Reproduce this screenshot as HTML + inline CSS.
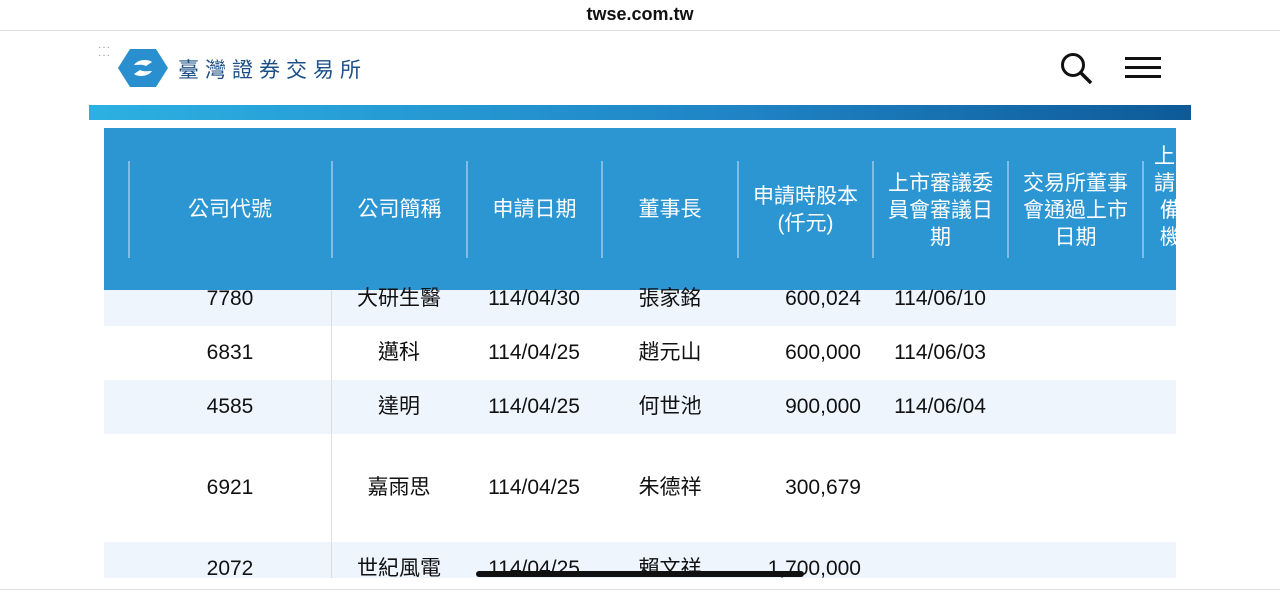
<!DOCTYPE html><html><head><meta charset="utf-8"><style>
body{margin:0;width:1280px;height:591px;overflow:hidden;background:#fff;font-family:"Liberation Sans","Noto Sans CJK TC",sans-serif;position:relative}
.a{position:absolute}
.h{color:#fff;font-size:21px;line-height:27px;text-align:center}
.c{position:absolute;font-size:21px;line-height:24px;color:#111;text-align:center;width:130px;margin-left:-65px}
.k{margin-top:0}
.vl{position:absolute;top:161px;height:97px;width:2px;background:#7fbde6}
</style></head><body>
<div class="a" style="top:4px;left:0;width:1280px;text-align:center;font-size:18px;font-weight:bold;color:#111">twse.com.tw</div>
<div class="a" style="top:30px;left:0;width:1280px;height:1px;background:#ddd"></div>
<div class="a" style="left:98px;top:44px;color:#888;font-size:10px;line-height:8px;letter-spacing:1px">···<br>···</div>
<svg class="a" style="left:118px;top:49px" width="50" height="38" viewBox="0 0 50 38"><path d="M12 0H38L50 19 38 38H12L0 19Z" fill="#2a8fcf"/><path d="M16 16C20 10 30 10 34 13L28 17C24 15 20 16 16 16ZM34 22C30 28 20 28 16 25L22 21C26 23 30 22 34 22Z" fill="#fff"/></svg>
<div class="a" style="left:178px;top:54px;font-size:21px;color:#1c4f86;letter-spacing:6px">臺灣證券交易所</div>
<svg class="a" style="left:1060px;top:52px" width="34" height="32" viewBox="0 0 34 32"><circle cx="13" cy="13" r="10.5" fill="none" stroke="#111" stroke-width="3"/><path d="M21 21L31 31" stroke="#111" stroke-width="3.5"/></svg>
<div class="a" style="left:1125px;top:57px;width:36px;height:3px;background:#111;box-shadow:0 9px #111,0 18px #111"></div>
<div class="a" style="left:89px;top:105px;width:1102px;height:15px;background:linear-gradient(90deg,#2cb0e2,#1f83c4 60%,#0e5a98)"></div>
<div class="a" style="left:104px;top:128px;width:1072px;height:162px;background:#2c96d2"></div>
<div class="vl" style="left:128px"></div><div class="vl" style="left:331px"></div><div class="vl" style="left:466px"></div><div class="vl" style="left:601px"></div><div class="vl" style="left:737px"></div><div class="vl" style="left:872px"></div><div class="vl" style="left:1007px"></div><div class="vl" style="left:1142px"></div>
<div class="a h" style="left:130px;width:200px;top:196px">公司代號</div>
<div class="a h" style="left:333px;width:133px;top:196px">公司簡稱</div>
<div class="a h" style="left:468px;width:133px;top:196px">申請日期</div>
<div class="a h" style="left:603px;width:134px;top:196px">董事長</div>
<div class="a h" style="left:739px;width:133px;top:183px">申請時股本<br>(仟元)</div>
<div class="a h" style="left:874px;width:133px;top:170px">上市審議委<br>員會審議日<br>期</div>
<div class="a h" style="left:1009px;width:133px;top:170px">交易所董事<br>會通過上市<br>日期</div>
<div class="a h" style="left:1154px;top:143px;width:22px;overflow:hidden;text-align:left">上<br>請<br>&nbsp;備<br>&nbsp;機</div>
<div class="a" style="left:104px;top:290px;width:1072px;height:36px;background:#eef5fd"></div>
<div class="a" style="left:104px;top:380px;width:1072px;height:54px;background:#eef5fd"></div>
<div class="a" style="left:104px;top:542px;width:1072px;height:36px;background:#eef5fd"></div>
<div class="a" style="left:331px;top:290px;width:1px;height:288px;background:#ddd"></div>
<div class="c" style="left:230px;top:287px">7780</div><div class="c k" style="left:399px;top:287px">大研生醫</div><div class="c" style="left:534px;top:287px">114/04/30</div><div class="c k" style="left:670px;top:287px">張家銘</div><div class="c" style="left:806px;top:287px;text-align:right;margin-left:-75px">600,024</div><div class="c" style="left:940px;top:287px">114/06/10</div>
<div class="c" style="left:230px;top:341px">6831</div><div class="c k" style="left:399px;top:341px">邁科</div><div class="c" style="left:534px;top:341px">114/04/25</div><div class="c k" style="left:670px;top:341px">趙元山</div><div class="c" style="left:806px;top:341px;text-align:right;margin-left:-75px">600,000</div><div class="c" style="left:940px;top:341px">114/06/03</div>
<div class="c" style="left:230px;top:395px">4585</div><div class="c k" style="left:399px;top:395px">達明</div><div class="c" style="left:534px;top:395px">114/04/25</div><div class="c k" style="left:670px;top:395px">何世池</div><div class="c" style="left:806px;top:395px;text-align:right;margin-left:-75px">900,000</div><div class="c" style="left:940px;top:395px">114/06/04</div>
<div class="c" style="left:230px;top:476px">6921</div><div class="c k" style="left:399px;top:476px">嘉雨思</div><div class="c" style="left:534px;top:476px">114/04/25</div><div class="c k" style="left:670px;top:476px">朱德祥</div><div class="c" style="left:806px;top:476px;text-align:right;margin-left:-75px">300,679</div>
<div class="c" style="left:230px;top:557px">2072</div><div class="c k" style="left:399px;top:557px">世紀風電</div><div class="c" style="left:534px;top:557px">114/04/25</div><div class="c k" style="left:670px;top:557px">賴文祥</div><div class="c" style="left:806px;top:557px;text-align:right;margin-left:-75px">1,700,000</div>
<div class="a" style="left:0;top:578px;width:1280px;height:13px;background:#fff"></div>
<div class="a" style="left:0;top:589px;width:1280px;height:1px;background:#ddd"></div>
<div class="a" style="left:476px;top:571px;width:328px;height:6px;border-radius:3px;background:#111"></div>
</body></html>
